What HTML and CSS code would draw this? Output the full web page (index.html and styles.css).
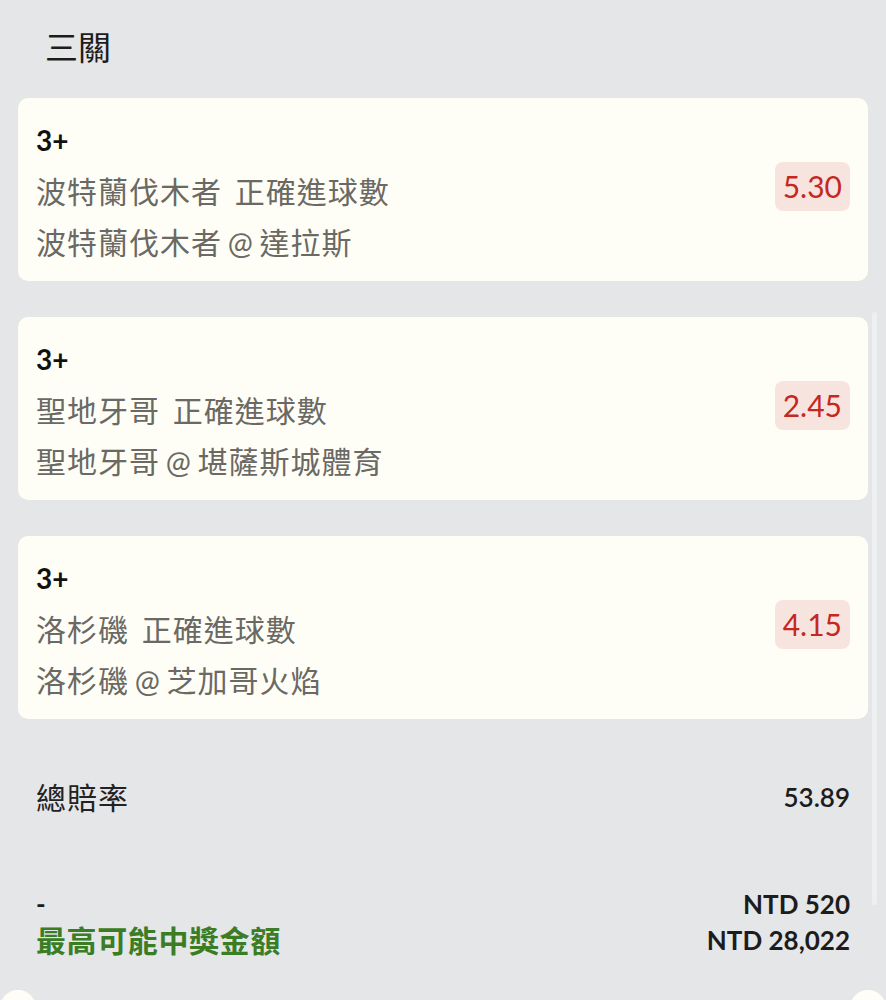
FILE: index.html
```html
<!DOCTYPE html>
<html lang="zh-Hant">
<head>
    <meta charset="UTF-8">
    <meta name="viewport" content="width=device-width, initial-scale=1.0">
    <title>三關</title>
    <link rel="stylesheet" href="styles.css">
</head>
<body>

    <h2 class="page-title">三關</h2>

    <div class="bet-list">
        <div class="bet-card">
            <div class="bet-info">
                <div class="bet-pick">3+</div>
                <div class="bet-market">波特蘭伐木者 正確進球數</div>
                <div class="bet-match">波特蘭伐木者 @ 達拉斯</div>
            </div>
            <div class="bet-odds">5.30</div>
        </div>

        <div class="bet-card">
            <div class="bet-info">
                <div class="bet-pick">3+</div>
                <div class="bet-market">聖地牙哥 正確進球數</div>
                <div class="bet-match">聖地牙哥 @ 堪薩斯城體育</div>
            </div>
            <div class="bet-odds">2.45</div>
        </div>

        <div class="bet-card">
            <div class="bet-info">
                <div class="bet-pick">3+</div>
                <div class="bet-market">洛杉磯 正確進球數</div>
                <div class="bet-match">洛杉磯 @ 芝加哥火焰</div>
            </div>
            <div class="bet-odds">4.15</div>
        </div>
    </div>

    <div class="summary">
        <div class="summary-row">
            <span class="summary-label">總賠率</span>
            <span class="summary-value">53.89</span>
        </div>
        <div class="summary-row payout">
            <div class="payout-left">
                <div class="stake-label">-</div>
                <div class="payout-label">最高可能中獎金額</div>
            </div>
            <div class="payout-right">
                <div>NTD 520</div>
                <div>NTD 28,022</div>
            </div>
        </div>
    </div>

    <!-- overlays -->
    <div class="scroll-thumb"></div>
    <div class="corner-btn left"></div>
    <div class="corner-btn right"></div>

</body>
</html>
```

FILE: styles.css
```css
body {
    margin: 0;
    font-family: Lato, "Noto Sans CJK TC", sans-serif;
    background: #e5e6e8;
    color: #1c1c1c;
    height: 1000px;
    overflow: hidden;
    position: relative;
}
.page-title {
    margin: 0;
    padding: 24px 0 28px 45px;
    font-size: 33px;
    line-height: 46px;
    font-weight: 400;
    color: #1c1c1c;
}
.bet-list {
    display: flex;
    flex-direction: column;
    gap: 36px;
    padding: 0 18px;
}
.bet-card {
    display: flex;
    align-items: center;
    justify-content: space-between;
    background: #fffef6;
    border-radius: 10px;
    padding: 17px 18px 14px 18px;
    height: 152px;
}
.bet-info {
    line-height: 51px;
}
.bet-pick {
    font-size: 28px;
    font-weight: 700;
    color: #111;
}
.bet-market, .bet-match {
    font-size: 30px;
    letter-spacing: 1px;
    color: #6a6964;
}
.bet-match {
    word-spacing: -3px;
}
.bet-market {
    word-spacing: 4px;
}
.bet-odds {
    background: #f8e4df;
    color: #c4281f;
    font-size: 30px;
    line-height: 49px;
    padding: 0 8px;
    border-radius: 8px;
    margin-top: -9px;
}
.summary {
    padding: 58px 36px 0 36px;
}
.summary-row {
    display: flex;
    justify-content: space-between;
    align-items: flex-start;
}
.summary-label {
    font-size: 30px;
    letter-spacing: 1px;
    line-height: 40px;
    color: #222;
}
.summary-value {
    font-size: 26px;
    line-height: 40px;
    font-weight: 600;
}
.payout {
    margin-top: 69px;
    line-height: 36px;
}
.stake-label {
    font-size: 26px;
    font-weight: 700;
}
.payout-label {
    font-size: 30px;
    letter-spacing: 0.6px;
    font-weight: 700;
    color: #3b7d25;
}
.payout-right {
    text-align: right;
    font-size: 26px;
    font-weight: 700;
}
.scroll-thumb {
    position: absolute;
    left: 872px;
    top: 312px;
    width: 5px;
    height: 593px;
    border-radius: 3px;
    background: #eeeff0;
}
.corner-btn {
    position: absolute;
    top: 990px;
    width: 36px;
    height: 36px;
    border-radius: 50%;
    background: #fffef6;
}
.corner-btn.left {
    left: 0px;
}
.corner-btn.right {
    left: 850px;
}
```
